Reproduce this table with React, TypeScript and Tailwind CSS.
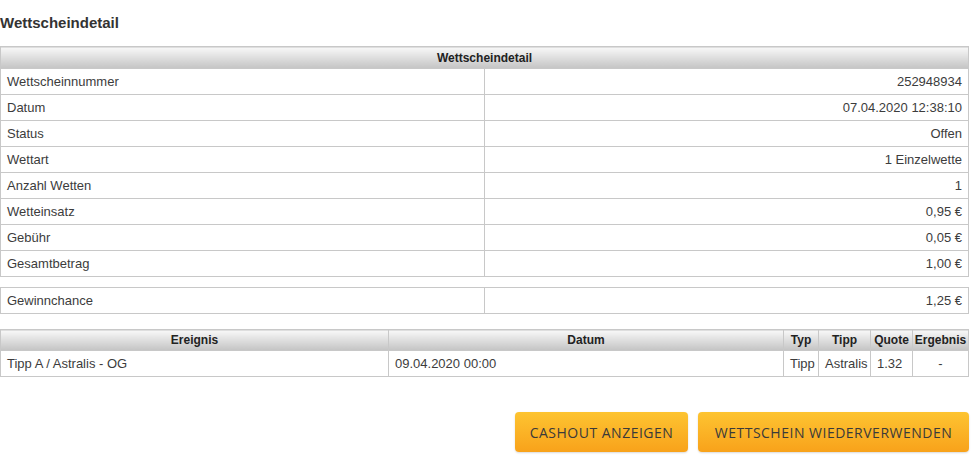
const summary = [
  ['Wettscheinnummer', '252948934'],
  ['Datum', '07.04.2020 12:38:10'],
  ['Status', 'Offen'],
  ['Wettart', '1 Einzelwette'],
  ['Anzahl Wetten', '1'],
  ['Wetteinsatz', '0,95 €'],
  ['Gebühr', '0,05 €'],
  ['Gesamtbetrag', '1,00 €'],
];

const headCell = 'h-[21px] p-0 text-[12px] font-bold text-[#222] bg-gradient-to-b from-[#f8f8f8] to-[#c4c4c4] border border-[#c8c8c8]';
const cell = 'h-[26px] border border-[#c8c8c8] px-[6px] text-[13px] text-[#3c3c3c]';
const btn = "h-[40px] rounded-[4px] bg-gradient-to-b from-[#fdc431] to-[#f8a21a] text-[14px] tracking-[0.5px] text-[#3a3a3a] font-['Open_Sans',sans-serif] shadow-[0_1px_2px_rgba(0,0,0,0.15)]";

export default function App() {
  return (
    <div className="w-[971px] h-[462px] bg-white font-['Liberation_Sans',Arial,sans-serif]">
      <h1 className="pt-[12px] h-[46px] text-[15px] font-bold text-[#333]">Wettscheindetail</h1>

      <table className="w-[969px] border-collapse table-fixed">
        <thead>
          <tr>
            <th colSpan={2} className={`${headCell} h-[22px]`}>Wettscheindetail</th>
          </tr>
        </thead>
        <tbody>
          {summary.map(([label, value]) => (
            <tr key={label}>
              <td className={`${cell} w-[484px] text-left`}>{label}</td>
              <td className={`${cell} text-right`}>{value}</td>
            </tr>
          ))}
        </tbody>
      </table>

      <table className="mt-[10px] w-[969px] border-collapse table-fixed">
        <tbody>
          <tr>
            <td className={`${cell} w-[484px] text-left`}>Gewinnchance</td>
            <td className={`${cell} text-right`}>1,25 €</td>
          </tr>
        </tbody>
      </table>

      <table className="mt-[15px] w-[969px] border-collapse table-fixed">
        <thead>
          <tr>
            <th className={`${headCell} w-[388px]`}>Ereignis</th>
            <th className={`${headCell} w-[395px]`}>Datum</th>
            <th className={`${headCell} w-[35px]`}>Typ</th>
            <th className={`${headCell} w-[52px]`}>Tipp</th>
            <th className={`${headCell} w-[42px]`}>Quote</th>
            <th className={headCell}>Ergebnis</th>
          </tr>
        </thead>
        <tbody>
          <tr>
            <td className={`${cell} text-left`}>Tipp A / Astralis - OG</td>
            <td className={`${cell} text-left`}>09.04.2020 00:00</td>
            <td className={`${cell} px-[3px] text-left`}>Tipp</td>
            <td className={`${cell} px-[4px] text-left`}>Astralis</td>
            <td className={`${cell} px-[6px] text-left`}>1.32</td>
            <td className={`${cell} text-center`}>-</td>
          </tr>
        </tbody>
      </table>

      <div className="mt-[35px] flex justify-end gap-[10px] pr-[2px]">
        <button className={`${btn} w-[173px]`}>CASHOUT ANZEIGEN</button>
        <button className={`${btn} w-[271px]`}>WETTSCHEIN WIEDERVERWENDEN</button>
      </div>
    </div>
  );
}
